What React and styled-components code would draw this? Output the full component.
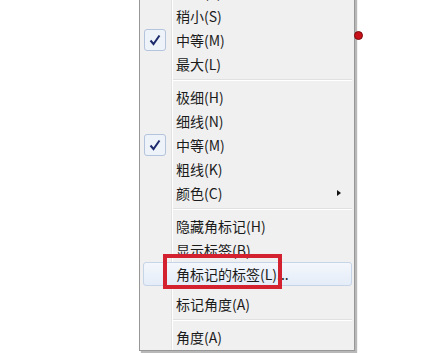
import React from "react";
import styled, { createGlobalStyle } from "styled-components";

const GlobalStyle = createGlobalStyle`
  html, body {
    margin: 0;
    padding: 0;
    background: #fff;
  }
  body {
    font-family: "Noto Sans CJK SC", "Noto Sans", "Liberation Sans", sans-serif;
  }
`;

const sections = [
  [
    { label: "最小(T)" },
    { label: "稍小(S)" },
    { label: "中等(M)", checked: true },
    { label: "最大(L)" },
  ],
  [
    { label: "极细(H)" },
    { label: "细线(N)" },
    { label: "中等(M)", checked: true },
    { label: "粗线(K)" },
    { label: "颜色(C)", submenu: true },
  ],
  [
    { label: "隐藏角标记(H)" },
    { label: "显示标签(B)" },
    { label: "角标记的标签(L)...", active: true, marked: true },
    { label: "标记角度(A)" },
  ],
  [{ label: "角度(A)" }],
];

const App = () => {
  return (
    <Page>
      <GlobalStyle />
      <Dot />
      <Menu>
        {sections.map((items, i) => (
          <React.Fragment key={i}>
            {i > 0 && <Separator />}
            {items.map((item, j) => (
              <Item key={j} $active={item.active}>
                <Gutter>
                  {item.checked && (
                    <CheckBox>
                      <svg width="12" height="12" viewBox="0 0 12 12">
                        <path
                          d="M1.5 6.5 L4.5 10 L10.5 1.5"
                          fill="none"
                          stroke="#1d2a6e"
                          strokeWidth="2"
                        />
                      </svg>
                    </CheckBox>
                  )}
                </Gutter>
                <Label>{item.label}</Label>
                {item.submenu && <Arrow />}
                {item.marked && <Annotation />}
              </Item>
            ))}
          </React.Fragment>
        ))}
      </Menu>
    </Page>
  );
};

const Page = styled.div`
  position: relative;
  width: 428px;
  height: 353px;
  overflow: hidden;
  background: #fff;
`;

const Menu = styled.div`
  width: 214px;
  margin: -24px 0 0 139px;
  padding: 3px 0 1px;
  border: 1px solid #979797;
  box-shadow: 2px 2px 1px rgba(0, 0, 0, 0.28);
  background: linear-gradient(
    to right,
    #f0f0f0 31px,
    #e2e3e3 31px,
    #e2e3e3 32px,
    #ffffff 32px,
    #ffffff 33px,
    #f0f0f0 33px
  );
`;

const Item = styled.div`
  position: relative;
  display: flex;
  align-items: center;
  height: 22px;
  margin: ${(p) => (p.$active ? "0 2px 6px 3px" : "0 2px 0 3px")};
  border: 1px solid ${(p) => (p.$active ? "#c6d4e8" : "transparent")};
  border-radius: 3px;
  background: ${(p) =>
    p.$active ? "linear-gradient(#f4f7fc, #e4ecf8)" : "transparent"};
`;

const Gutter = styled.div`
  width: 32px;
  flex: none;
  display: flex;
  align-items: center;
`;

const CheckBox = styled.div`
  width: 20px;
  height: 20px;
  border: 1px solid #b3c4dc;
  border-radius: 3px;
  background: #eef2f9;
  display: flex;
  align-items: center;
  justify-content: center;
`;

const Label = styled.span`
  flex: 1;
  font-size: 14px;
  color: #1b1b1b;
  white-space: nowrap;
`;

const Arrow = styled.span`
  width: 0;
  height: 0;
  margin-right: 10px;
  border-top: 3.5px solid transparent;
  border-bottom: 3.5px solid transparent;
  border-left: 4px solid #111;
`;

const Separator = styled.div`
  height: 2px;
  margin: 3px 2px 4px 33px;
  border-top: 1px solid #e0e0e0;
  border-bottom: 1px solid #ffffff;
  box-sizing: border-box;
`;

const Annotation = styled.div`
  position: absolute;
  left: 19px;
  top: -9px;
  width: 111px;
  height: 27px;
  border: 4px solid #d42130;
`;

const Dot = styled.div`
  position: absolute;
  left: 354px;
  top: 31px;
  width: 7px;
  height: 7px;
  border-radius: 50%;
  background: #c8101a;
  border: 1px solid #7a0a0a;
`;

export default App;
